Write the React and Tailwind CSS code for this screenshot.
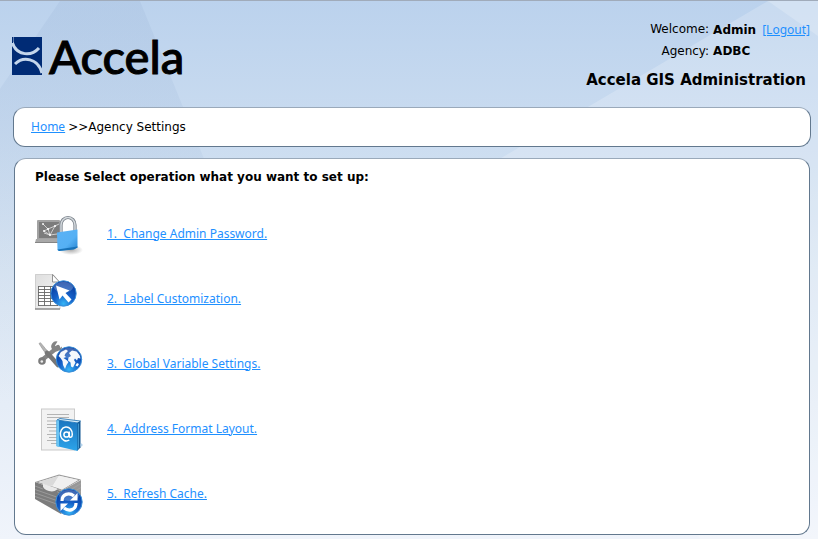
import React from 'react';

const BlueBall = ({ id, cx, cy, r }) => (
    <>
        <defs>
            <radialGradient id={id} cx="50%" cy="90%" r="85%">
                <stop offset="0%" stopColor="#35b4f6" />
                <stop offset="45%" stopColor="#1560c8" />
                <stop offset="100%" stopColor="#083a9c" />
            </radialGradient>
        </defs>
        <circle cx={cx} cy={cy} r={r} fill={`url(#${id})`} stroke="#3a8fd8" strokeWidth="1" />
        <ellipse cx={cx} cy={cy - r / 2} rx={r * 0.75} ry={r * 0.42} fill="#fff" opacity="0.22" />
    </>
);

const PasswordIcon = () => (
    <svg viewBox="0 0 60 65" className="w-[60px] h-[65px]" aria-hidden="true">
        <defs>
            <linearGradient id="lockBody" x1="0" y1="0" x2="1" y2="1">
                <stop offset="0%" stopColor="#5bb2f5" />
                <stop offset="60%" stopColor="#55b0f4" />
                <stop offset="100%" stopColor="#2583d0" />
            </linearGradient>
            <radialGradient id="lockShadow">
                <stop offset="0%" stopColor="#777" stopOpacity="0.6" />
                <stop offset="100%" stopColor="#777" stopOpacity="0" />
            </radialGradient>
        </defs>
        <rect x="2" y="19" width="23" height="20" rx="1" fill="#a2a2a2" />
        <rect x="4" y="21" width="20" height="16" fill="#7c7c7c" />
        <path d="M8 23l5 5 7-3 4-2M13 28l2 6 7-1M9 32l6 2-6-4 4-2M20 25l-5 9" stroke="#e2e2e2" strokeWidth="0.8" fill="none" />
        <g fill="#fff">
            <circle cx="8" cy="23" r="0.9" />
            <circle cx="13" cy="28" r="1.1" />
            <circle cx="20" cy="25" r="1" />
            <circle cx="15" cy="34" r="1.1" />
            <circle cx="9" cy="30" r="1" />
        </g>
        <path d="M1 38h22v4H0z" fill="#a8a8a8" />
        <path d="M0 41h23v1H0z" fill="#858585" />
        <ellipse cx="36" cy="49" rx="12" ry="5" fill="url(#lockShadow)" />
        <path d="M26 32v-8a7 7.500 0 0 1 14 0v6" fill="none" stroke="#777f88" strokeWidth="3.200" />
        <path d="M26 32v-8a7 7.500 0 0 1 14 0v6" fill="none" stroke="#d5dade" strokeWidth="1.500" />
        <path d="M22 31.500l20.500-3v18L39 48l-15.500 2-1-1z" fill="url(#lockBody)" />
        <path d="M22.500 48.500l20-3v1L39 48.500 24 50z" fill="#1872b8" />
    </svg>
);

const LabelIcon = () => (
    <svg viewBox="0 0 60 65" className="w-[60px] h-[65px]" aria-hidden="true">
        <defs>
            <linearGradient id="sheet" x1="0" y1="0" x2="1" y2="1">
                <stop offset="0%" stopColor="#dedede" />
                <stop offset="100%" stopColor="#f6f6f6" />
            </linearGradient>
        </defs>
        <path d="M0 8h18l7 8v27H0z" fill="url(#sheet)" />
        <path d="M0.500 43V8.500H18l7 8V43" fill="none" stroke="#cfcfcf" strokeWidth="1" />
        <path d="M0 43h25" stroke="#8b8b8b" strokeWidth="1.500" />
        <path d="M17.500 8.500V16H24.500z" fill="#fff" stroke="#888" strokeWidth="0.9" />
        <rect x="3" y="20" width="20" height="20" fill="#fff" />
        <path d="M3 20.500h20M3 23.500h20M3 26.500h20M3 29.500h20M3 32.500h20M3 35.500h20M3 39.500h20M3.500 20v20M9.500 20v20M15.500 20v20M22.500 20v20" stroke="#666" strokeWidth="0.9" fill="none" />
        <BlueBall id="ballLabel" cx={28.5} cy={27.5} r={12.7} />
        <path d="M21 19.500l13.500 5-4 2.500 6 6.500-3 3-6-7-3 4z" fill="#fff" />
    </svg>
);

const GlobalIcon = () => (
    <svg viewBox="0 0 60 65" className="w-[60px] h-[65px]" aria-hidden="true">
        <path d="M7 29L23 16" stroke="#858585" strokeWidth="4.200" strokeLinecap="round" />
        <circle cx="7" cy="30" r="3.800" fill="#7c7c7c" />
        <circle cx="6.800" cy="30.500" r="1.300" fill="#eee" />
        <path d="M22.500 10.500a5 5 0 0 0-5.500 7.500c1 2 4 3 6 2l3.500-2-1.500-1.500-3 .5-2-2.500z" fill="#858585" />
        <path d="M24 19.500c2 0 3-1.500 3-4l-2.500 2z" fill="#858585" />
        <path d="M4 12.500l1.500-.8 5 6 4 4.500-2.500 2-4-5.500z" fill="#b5b5b5" stroke="#8e8e8e" strokeWidth="0.6" />
        <path d="M12 22l4 4 7 8" stroke="#777" strokeWidth="4.600" strokeLinecap="round" />
        <BlueBall id="ballGlobe" cx={34} cy={28.500} r={12.7} />
        <path d="M23.500 25l2.500-4 5-2.500 2 1.500-2.500 2.500-1 2 1.500 1.500-2.500 1 3 2 2 2-2 3-1.500 4-2-4-.5-4-2-3z" fill="#fff" opacity="0.95" />
        <path d="M34 22l3-2.500 4.500 1 3 3.500 1 3.500-2.500-.5-1 2.500-2-2-1 1.500 1.500 2.500-2.500 5-2-1-.5-4-2.500-2 .5-3 2.500-1.500z" fill="#fff" opacity="0.95" />
        <path d="M42 32l2 1-1.500 2.500-2-1z" fill="#fff" />
    </svg>
);

const AddressIcon = () => (
    <svg viewBox="0 0 60 65" className="w-[60px] h-[65px]" aria-hidden="true">
        <defs>
            <linearGradient id="bookCover" x1="0" y1="0" x2="0" y2="1">
                <stop offset="0%" stopColor="#1b76c0" />
                <stop offset="50%" stopColor="#248cd4" />
                <stop offset="100%" stopColor="#2ca4ea" />
            </linearGradient>
        </defs>
        <rect x="6.500" y="13" width="33" height="41" fill="#f2f2f2" stroke="#c9c9c9" />
        <path d="M12 18.500h22M12 21.500h22M12 25h17M12 28.500h10M12 31.500h10M14 35h8M12 38.500h10M14 41.500h8M12 44.500h10M16 47.500h6" stroke="#b4b4b4" fill="none" />
        <path d="M22 24l3-1.500 20.500 2.500-2.500 2z" fill="#d9eefa" stroke="#1b6eb0" strokeWidth="0.8" />
        <path d="M42 27l3.500-2v26.500L42 55z" fill="#105792" />
        <path d="M43.500 27.500v25" stroke="#57b4ea" strokeWidth="0.7" />
        <path d="M21.500 24l21 3v28l-21-5z" fill="url(#bookCover)" />
        <path d="M21.500 24l2.500.4V51l-2.500-.8z" fill="#6bc4f2" />
        <circle cx="31.500" cy="38.500" r="2.600" fill="none" stroke="#fff" strokeWidth="1.500" />
        <path d="M34.300 35.500v4.500c0 2 3 2 3-1.500a6 7 0 1 0-3 5.500" fill="none" stroke="#fff" strokeWidth="1.500" />
        <path d="M45 49h3M46.500 47.500v3" stroke="#a9cdea" strokeWidth="0.8" />
    </svg>
);

const CacheIcon = () => (
    <svg viewBox="0 0 60 65" className="w-[60px] h-[65px]" aria-hidden="true">
        <path d="M0 21l26 9v23L0 38z" fill="#7c7c7c" />
        <path d="M26 30l20-11v19L26 53z" fill="#989898" />
        <path d="M0 21L24 13.500 46 18.500 26 30z" fill="#9c9c9c" />
        <path d="M3.500 21L24 14.700 43 19 27 28.500z" fill="#f4f4f4" />
        <path d="M3.500 21L24 14.700l-6 9.800-4 .5z" fill="#dadada" />
        <path d="M24 14.700L43 19 27 28.500l-9-4z" fill="#f0f0f0" />
        <path d="M8 22.500v3c1 4 10 7 14 3v-1z" fill="#e9e9e9" />
        <path d="M0 25l8 3M0 28.500l26 9M0 32l26 9M0 35.500l26 9M22 30.500l4 3M26 34.500l20-12M26 38.500l20-12M26 42.500l20-12" stroke="#a6a6a6" strokeWidth="0.7" fill="none" />
        <BlueBall id="ballCache" cx={34} cy={41} r={13.2} />
        <path d="M27 40c0-7 7-9 12-5" fill="none" stroke="#fff" strokeWidth="3.200" />
        <path d="M42.500 32v7.500H35z" fill="#fff" />
        <path d="M41 42c0 7-7 9-12 5" fill="none" stroke="#fff" strokeWidth="3.200" />
        <path d="M25.500 50v-7.500H33z" fill="#fff" />
    </svg>
);

const operations = [
    { label: 'Change Admin Password.', Icon: PasswordIcon },
    { label: 'Label Customization.', Icon: LabelIcon },
    { label: 'Global Variable Settings.', Icon: GlobalIcon },
    { label: 'Address Format Layout.', Icon: AddressIcon },
    { label: 'Refresh Cache.', Icon: CacheIcon },
];

const linkClass = "text-[#1e90ff] underline font-['Noto_Sans','Open_Sans',sans-serif]";

const Logo = () => (
    <div className="flex items-center gap-[7px]">
        <svg viewBox="0 0 30 38" className="w-[30px] h-[38px]" aria-hidden="true">
            <path d="M0 0h30v38H0z" fill="#002b75" />
            <path d="M0 0v5c5 15 20 14 27 6" fill="none" stroke="#c4d6ec" strokeWidth="3" />
            <path d="M0 0h1v6H0z" fill="#002b75" />
            <path d="M3 27c8-8 23-6 27 9" fill="none" stroke="#c4d6ec" strokeWidth="3" />
        </svg>
        <span className="font-['Lato',sans-serif] text-[47px] leading-[38px] font-medium text-black [-webkit-text-stroke:1px_#000]">
            Accela
        </span>
    </div>
);

const App = () => {
    return (
        <div className="relative isolate min-h-screen border-t border-[#a0abba] bg-linear-to-b from-[#bbd2ed] via-[#dae6f3] to-[#f0f4fb] px-3 pb-1 font-['DejaVu_Sans',Verdana,sans-serif] text-[12px] text-black">
            {/* Background facets */}
            <svg
                viewBox="0 0 818 539"
                preserveAspectRatio="none"
                className="absolute inset-0 -z-10 w-full h-full"
                aria-hidden="true"
            >
                <defs>
                    <linearGradient id="facetFade" x1="0" y1="0" x2="0" y2="1">
                        <stop offset="0%" stopColor="#a3bcdc" stopOpacity="0.3" />
                        <stop offset="100%" stopColor="#a3bcdc" stopOpacity="0" />
                    </linearGradient>
                </defs>
                <path d="M60 0h80l64 158v242H0V88z" fill="url(#facetFade)" />
                <path d="M768 0h50v539H700L500 158z" fill="#fff" opacity="0.2" />
                <path d="M768 0h50v35z" fill="#fff" opacity="0.2" />
            </svg>

            {/* Header */}
            <header className="flex justify-between h-[106px]">
                <div className="pt-9">
                    <Logo />
                </div>
                <div className="flex flex-col items-end pt-[18px] -mr-1">
                    <div className="grid grid-cols-[auto_auto] gap-x-1 leading-[21px]">
                        <span className="text-right">Welcome:</span>
                        <span>
                            <b>Admin</b>
                            <a href="#logout" className={`${linkClass} ml-[6px]`}>[Logout]</a>
                        </span>
                        <span className="text-right">Agency:</span>
                        <b>ADBC</b>
                    </div>
                    <h1 className="text-[15px] leading-5 font-bold mt-2 mr-1">Accela GIS Administration</h1>
                </div>
            </header>

            {/* Breadcrumb */}
            <nav className="flex items-center h-10 ml-px -mr-[5px] rounded-xl border border-[#62788e] border-t-[#9aa9ba] bg-white px-[17px]">
                <a href="#home" className={`${linkClass} mr-[3px]`}>Home</a>
                <span>&gt;&gt;Agency Settings</span>
            </nav>

            {/* Operations */}
            <main className="mt-[11px] ml-0.5 -mr-1 rounded-xl border border-[#62788e] border-t-[#9aa9ba] bg-white px-5 pt-2 pb-2">
                <h2 className="font-bold leading-5">Please Select operation what you want to set up:</h2>
                <ul className="mt-[14px]">
                    {operations.map(({ label, Icon }, index) => (
                        <li key={label} className="flex items-center gap-3 h-[65px]">
                            <Icon />
                            <a href={`#operation-${index + 1}`} className={`${linkClass} whitespace-pre`}>
                                {`${index + 1}.  ${label}`}
                            </a>
                        </li>
                    ))}
                </ul>
            </main>
        </div>
    );
};

export default App;
